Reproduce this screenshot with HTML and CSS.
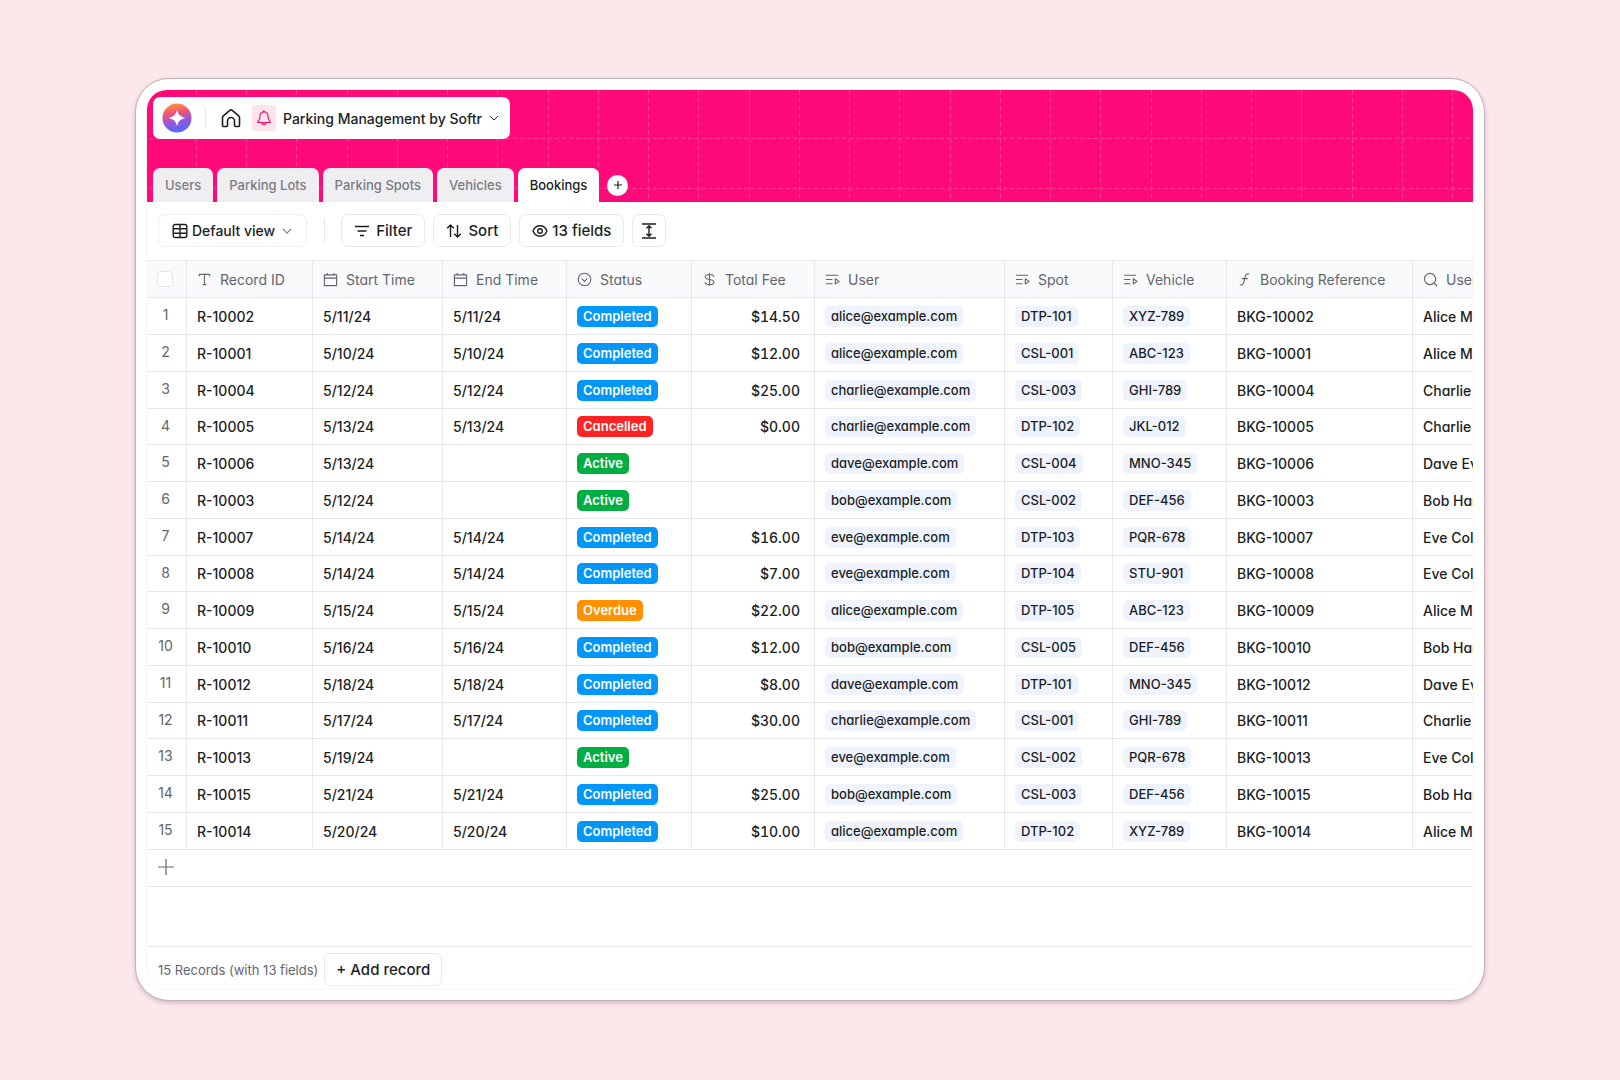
FILE: index.html
```
<!DOCTYPE html>
<html lang="en">
<head>
<meta charset="UTF-8">
<meta name="viewport" content="width=device-width, initial-scale=1.0">
<title>Parking Management by Softr</title>
<link rel="stylesheet" href="styles.css">
</head>
<body>
<svg class="sprite" aria-hidden="true">
    <symbol id="i-chevron" viewBox="0 0 12 12"><path d="M1 3.500 6 8.500 11 3.500"/></symbol>
    <symbol id="i-text" viewBox="0 0 16 16"><path d="M2.500 4.500V2.500h11v2M8 2.500v11M6 13.500h4"/></symbol>
    <symbol id="i-date" viewBox="0 0 16 16"><path d="M1.500 3h13v11.500h-13zM1.500 6.500h13M4.500 1v2M11.500 1v2"/></symbol>
    <symbol id="i-select" viewBox="0 0 16 16"><circle cx="8" cy="8" r="6.700"/><path d="M5 7l3 3 3-3"/></symbol>
    <symbol id="i-money" viewBox="0 0 16 16"><path d="M8 1v14M12.500 5C12.500 3.300 11 2.700 8 2.700S3.500 3.700 3.500 5.300C3.500 7.200 5.500 7.600 8 8s4.700.9 4.700 2.800S11 13.300 8 13.300 3.300 12.500 3.300 10.700"/></symbol>
    <symbol id="i-link" viewBox="0 0 16 16"><path d="M1 3.500h13M1 8h7M1 12.500h7M11 7.200v5.600l4-2.800z"/></symbol>
    <symbol id="i-formula" viewBox="0 0 16 16"><path d="M13 2.200c-2.500-.6-3.600 0-4.200 2.500L7.200 11.300C6.600 13.700 5.500 14.300 3 13.700M5 7h6.500"/></symbol>
    <symbol id="i-search" viewBox="0 0 16 16"><circle cx="7.500" cy="7.500" r="6"/><path d="M12 12l3 3"/></symbol>
</svg>

<main class="window">
    <div class="screen">
        <header class="banner">
            <svg class="banner-grid" aria-hidden="true">
                <defs>
                    <pattern id="columns" x="49" y="0" width="201" height="8" patternUnits="userSpaceOnUse">
                        <path d="M.5 0v5M50.500 0v5M100.500 0v5M151.500 0v5"/>
                    </pattern>
                    <pattern id="rows" x="2" y="48" width="7" height="50" patternUnits="userSpaceOnUse">
                        <path d="M0 .5h4"/>
                    </pattern>
                </defs>
                <rect width="100%" height="100%" fill="url(#columns)"/>
                <rect width="100%" height="100%" fill="url(#rows)"/>
            </svg>
            <div class="app-bar">
                <a class="logo" href="#" aria-label="Softr">
                    <svg viewBox="0 0 30 30">
                        <defs>
                            <linearGradient id="sunset" x1="0.4" y1="0" x2="0.6" y2="1">
                                <stop offset="0" stop-color="#ff9142"/>
                                <stop offset="0.3" stop-color="#f2566f"/>
                                <stop offset="0.6" stop-color="#9a57d8"/>
                                <stop offset="1" stop-color="#4b6bff"/>
                            </linearGradient>
                        </defs>
                        <circle cx="15" cy="15" r="14.500" fill="url(#sunset)"/>
                        <path fill="#fff" d="M15 6.800c1.300 5 3.200 6.900 8.200 8.200-5 1.300-6.900 3.200-8.200 8.200-1.300-5-3.200-6.900-8.200-8.200 5-1.300 6.900-3.200 8.200-8.200z"/>
                    </svg>
                </a>
                <span class="divider"></span>
                <a class="home" href="#" aria-label="Home">
                    <svg viewBox="0 0 20 20"><path d="M1.500 9.500a2 2 0 0 1 .8-1.600L8.800 2.300a2 2 0 0 1 2.400 0l6.500 5.600a2 2 0 0 1 .8 1.600v8a1 1 0 0 1-1 1h-3a1 1 0 0 1-1-1V13a3.500 3.500 0 0 0-7 0v4.500a1 1 0 0 1-1 1h-3a1 1 0 0 1-1-1z"/></svg>
                </a>
                <button class="app-name">
                    <span class="app-icon">
                        <svg viewBox="0 0 16 16"><path d="M8 2C5.400 2 4 3.800 4 6.200 4 9 3 10.500 1.700 12.500h12.600C13 10.500 12 9 12 6.200 12 3.800 10.600 2 8 2zM6 12.500a2 2 0 0 0 4 0M7 2a1 1 0 0 1 2 0"/></svg>
                    </span>
                    Parking Management by Softr
                    <svg class="chevron"><use href="#i-chevron"/></svg>
                </button>
            </div>
            <nav class="tabs">
                <a href="#">Users</a>
                <a href="#">Parking Lots</a>
                <a href="#">Parking Spots</a>
                <a href="#">Vehicles</a>
                <a class="active" href="#">Bookings</a>
                <button class="add-tab" aria-label="Add table">
                    <svg viewBox="0 0 10 10"><path d="M5 1v8M1 5h8"/></svg>
                </button>
            </nav>
        </header>

        <div class="toolbar">
            <button class="view">
                <svg viewBox="0 0 16 16"><rect x="1.200" y="1.500" width="13.600" height="13" rx="2"/><path d="M1.200 5.800h13.600M1.200 10.200h13.600M8 1.500v13"/></svg>
                Default view
                <svg class="chevron"><use href="#i-chevron"/></svg>
            </button>
            <span class="divider"></span>
            <button class="filter">
                <svg viewBox="0 0 16 16"><path d="M1 3.500h14M3.500 8h9M6 12.500h4"/></svg>
                Filter
            </button>
            <button class="sort">
                <svg viewBox="0 0 16 16"><path d="M4.500 14V2M1.200 5.300 4.500 2l3.300 3.300M11.500 2v12M8.200 10.700l3.300 3.300 3.300-3.300"/></svg>
                Sort
            </button>
            <button class="fields">
                <svg viewBox="0 0 16 16"><path d="M1 8c1.300-3.300 3.800-5.200 7-5.200S13.700 4.700 15 8c-1.300 3.300-3.800 5.200-7 5.200S2.300 11.300 1 8z"/><circle cx="8" cy="8" r="2.300"/></svg>
                13 fields
            </button>
            <button class="row-height" aria-label="Row height">
                <svg viewBox="0 0 16 16"><path d="M1 1h14M1 15h14M8 3v10M5.500 5.300 8 2.800l2.500 2.500M5.500 10.700 8 13.200l2.500-2.500"/></svg>
            </button>
        </div>

        <div class="grid">
            <table>
                <colgroup>
                    <col class="c-num"><col class="c-id"><col class="c-start"><col class="c-end"><col class="c-status"><col class="c-fee">
                    <col class="c-user"><col class="c-spot"><col class="c-vehicle"><col class="c-ref"><col class="c-name">
                </colgroup>
                <thead>
                    <tr>
                        <th><input type="checkbox" aria-label="Select all records"></th>
                        <th><span><svg><use href="#i-text"/></svg>Record ID</span></th>
                        <th><span><svg><use href="#i-date"/></svg>Start Time</span></th>
                        <th><span><svg><use href="#i-date"/></svg>End Time</span></th>
                        <th><span><svg><use href="#i-select"/></svg>Status</span></th>
                        <th><span><svg><use href="#i-money"/></svg>Total Fee</span></th>
                        <th><span><svg><use href="#i-link"/></svg>User</span></th>
                        <th><span><svg><use href="#i-link"/></svg>Spot</span></th>
                        <th><span><svg><use href="#i-link"/></svg>Vehicle</span></th>
                        <th><span><svg><use href="#i-formula"/></svg>Booking Reference</span></th>
                        <th><span><svg><use href="#i-search"/></svg>User Name</span></th>
                    </tr>
                </thead>
                <tbody id="records"></tbody>
            </table>
            <button class="add-row" aria-label="Add row">
                <svg viewBox="0 0 16 16"><path d="M8 0v16M0 8h16"/></svg>
            </button>
        </div>

        <footer class="footer">
            <span>15 Records (with 13 fields)</span>
            <button>+ Add record</button>
        </footer>
    </div>
</main>

<script src="script.js"></script>
</body>
</html>
```
FILE: styles.css
```
* {
    box-sizing: border-box;
}
body {
    margin: 0;
    min-height: 100vh;
    display: flex;
    padding: 78px 135px 79px;
    background-color: #fce7eb;
    font-family: Inter, sans-serif;
    color: #1b1e24;
}
button {
    margin: 0;
    font: inherit;
    color: inherit;
    border: none;
    background: none;
    cursor: pointer;
}
a {
    color: inherit;
    text-decoration: none;
}
svg {
    flex: none;
    fill: none;
    stroke: currentColor;
    stroke-width: 1.2;
    stroke-linejoin: round;
}
.sprite {
    display: none;
}
.window {
    flex: 1;
    min-width: 0;
    display: flex;
    padding: 11px;
    border: 1px solid #bfb1b5;
    border-radius: 34px;
    background-color: #fff;
    box-shadow: 0 2px 4px rgba(90, 50, 60, 0.25);
}
.screen {
    flex: 1;
    min-width: 0;
    display: flex;
    flex-direction: column;
    overflow: hidden;
    border-radius: 20px;
    box-shadow: 0 0 0 1px #f6f6f7;
}
.divider {
    width: 1px;
    background-color: #e6e8eb;
}
.chevron {
    width: 12px;
    height: 12px;
}

/* pink banner */
.banner {
    position: relative;
    display: flex;
    flex-direction: column;
    align-items: flex-start;
    gap: 29px;
    padding: 7px 6px 0;
    background-color: #ff0a78;
}
.banner-grid {
    position: absolute;
    inset: 0;
    width: 100%;
    height: 100%;
    stroke: #ff3a92;
    stroke-width: 1;
}
.banner-grid rect {
    stroke: none;
}
.app-bar {
    position: relative;
    display: flex;
    align-items: center;
    height: 42px;
    padding: 0 11px 0 9px;
    border-radius: 7px;
    background-color: #fff;
}
.logo,
.home {
    display: flex;
}
.logo svg {
    width: 30px;
    height: 30px;
    stroke: none;
}
.app-bar .divider {
    height: 22px;
    margin: 0 15px 0 13px;
}
.home svg {
    width: 20px;
    height: 20px;
    stroke-width: 1.6;
}
.app-name {
    display: flex;
    align-items: center;
    gap: 7px;
    margin-left: 11px;
    padding: 0;
    font-size: 14px;
    font-weight: 500;
}
.app-icon {
    display: flex;
    align-items: center;
    justify-content: center;
    width: 24px;
    height: 26px;
    border-radius: 4px;
    background-color: #ffe3ec;
    color: #f0146e;
}
.app-icon svg {
    width: 16px;
    height: 16px;
}
.app-name .chevron {
    width: 10px;
    height: 10px;
}
.tabs {
    position: relative;
    display: flex;
    gap: 4px;
    height: 34px;
    font-size: 13px;
    font-weight: 500;
}
.tabs a {
    display: flex;
    align-items: center;
    padding: 0 12px;
    border-radius: 7px 7px 0 0;
    background-color: #efeff2;
    color: #7a7b82;
}
.tabs .active {
    background-color: #fff;
    color: #1b1e24;
}
.add-tab {
    display: flex;
    align-items: center;
    justify-content: center;
    align-self: center;
    width: 21px;
    height: 21px;
    margin-left: 4px;
    padding: 0;
    border-radius: 50%;
    background-color: #fff;
}
.add-tab svg {
    width: 10px;
    height: 10px;
}

/* view controls */
.toolbar {
    display: flex;
    align-items: center;
    gap: 8px;
    padding: 12px 11px 13px;
    font-size: 15px;
    font-weight: 500;
}
.toolbar button {
    display: flex;
    align-items: center;
    gap: 4px;
    height: 33px;
    padding: 0 12px;
    border: 1px solid #e6e8eb;
    border-radius: 7px;
}
.toolbar svg {
    width: 16px;
    height: 16px;
    stroke-width: 1.4;
}
.toolbar .view {
    padding: 0 14px 0 13px;
    border-color: #eceef0;
    font-size: 14px;
}
.toolbar .chevron {
    width: 10px;
    height: 10px;
    margin-left: 3px;
    color: #7a7b82;
}
.toolbar .divider {
    height: 26px;
    margin: 0 8px 0 9px;
}
.toolbar .filter,
.toolbar .sort {
    gap: 6px;
}
.toolbar .row-height {
    padding: 0 8px;
}

/* records */
.grid {
    flex: 1;
    overflow: hidden;
    border-top: 1px solid #e6e8eb;
}
table {
    width: 100%;
    min-width: 1326px;
    table-layout: fixed;
    border-collapse: separate;
    border-spacing: 0;
    font-size: 14px;
    font-weight: 500;
    font-feature-settings: "cv11";
}
.c-num { width: 40px; }
.c-id { width: 126px; }
.c-start { width: 130px; }
.c-end { width: 124px; }
.c-status { width: 125px; }
.c-fee { width: 123px; }
.c-user { width: 190px; }
.c-spot { width: 108px; }
.c-vehicle { width: 114px; }
.c-ref { width: 186px; }
th,
td {
    height: 37px;
    padding: 0 10px;
    border-right: 1px solid #e6e8eb;
    border-bottom: 1px solid #e6e8eb;
    text-align: left;
    white-space: nowrap;
    overflow: hidden;
}
/* four rows share 147px */
tbody tr:nth-child(4n) td {
    height: 36px;
}
th:last-child,
td:last-child {
    padding-right: 0;
    border-right: none;
}
th {
    background-color: #f8fafb;
    color: #63666d;
    font-weight: 400;
}
th span {
    display: flex;
    align-items: center;
    gap: 8px;
}
th svg {
    width: 15px;
    height: 15px;
}
th input {
    appearance: none;
    display: block;
    width: 16px;
    height: 16px;
    margin: 0;
    border: 1px solid #e3e5e8;
    border-radius: 4px;
    background-color: #fff;
}
td:first-child {
    padding: 0 2px 3px 0;
    text-align: center;
    color: #63666d;
    font-weight: 400;
}
.fee {
    padding-right: 14px;
    text-align: right;
    font-variant-numeric: tabular-nums;
}
.tag {
    display: inline-block;
    padding: 0 6px;
    border-radius: 5px;
    font-size: 13px;
    line-height: 21px;
}
.status {
    color: #fff;
    font-weight: 600;
}
.completed { background-color: #0096fa; }
.cancelled { background-color: #ff2424; }
.active-now { background-color: #00ae42; }
.overdue { background-color: #ff9100; }
.link {
    background-color: #eef3fd;
}
.add-row {
    display: flex;
    align-items: center;
    width: 100%;
    height: 37px;
    padding: 0 11px 2px;
    border-bottom: 1px solid #e6e8eb;
    color: #63666d;
}
.add-row svg {
    width: 16px;
    height: 16px;
}

.footer {
    display: flex;
    align-items: center;
    gap: 6px;
    padding: 6px 11px 3px;
    border-top: 1px solid #e6e8eb;
    color: #63666d;
    font-size: 13px;
}
.footer button {
    height: 33px;
    padding: 0 11px;
    border: 1px solid #e6e8eb;
    border-radius: 6px;
    color: #1b1e24;
    font-size: 15px;
    font-weight: 500;
}
```
FILE: script.js
```
const bookings = [
    ["10002", "5/11/24", "5/11/24", "Completed", "$14.50", "alice", "DTP-101", "XYZ-789"],
    ["10001", "5/10/24", "5/10/24", "Completed", "$12.00", "alice", "CSL-001", "ABC-123"],
    ["10004", "5/12/24", "5/12/24", "Completed", "$25.00", "charlie", "CSL-003", "GHI-789"],
    ["10005", "5/13/24", "5/13/24", "Cancelled", "$0.00", "charlie", "DTP-102", "JKL-012"],
    ["10006", "5/13/24", "", "Active", "", "dave", "CSL-004", "MNO-345"],
    ["10003", "5/12/24", "", "Active", "", "bob", "CSL-002", "DEF-456"],
    ["10007", "5/14/24", "5/14/24", "Completed", "$16.00", "eve", "DTP-103", "PQR-678"],
    ["10008", "5/14/24", "5/14/24", "Completed", "$7.00", "eve", "DTP-104", "STU-901"],
    ["10009", "5/15/24", "5/15/24", "Overdue", "$22.00", "alice", "DTP-105", "ABC-123"],
    ["10010", "5/16/24", "5/16/24", "Completed", "$12.00", "bob", "CSL-005", "DEF-456"],
    ["10012", "5/18/24", "5/18/24", "Completed", "$8.00", "dave", "DTP-101", "MNO-345"],
    ["10011", "5/17/24", "5/17/24", "Completed", "$30.00", "charlie", "CSL-001", "GHI-789"],
    ["10013", "5/19/24", "", "Active", "", "eve", "CSL-002", "PQR-678"],
    ["10015", "5/21/24", "5/21/24", "Completed", "$25.00", "bob", "CSL-003", "DEF-456"],
    ["10014", "5/20/24", "5/20/24", "Completed", "$10.00", "alice", "DTP-102", "XYZ-789"]
];

const names = {
    alice: "Alice Moore",
    bob: "Bob Harris",
    charlie: "Charlie Davis",
    dave: "Dave Evans",
    eve: "Eve Collins"
};

const statusClass = {
    Completed: "completed",
    Cancelled: "cancelled",
    Active: "active-now",
    Overdue: "overdue"
};

document.getElementById("records").innerHTML = bookings.map(([id, start, end, status, fee, user, spot, vehicle], i) => `
    <tr>
        <td>${i + 1}</td>
        <td>R-${id}</td>
        <td>${start}</td>
        <td>${end}</td>
        <td><span class="tag status ${statusClass[status]}">${status}</span></td>
        <td class="fee">${fee}</td>
        <td><span class="tag link">${user}@example.com</span></td>
        <td><span class="tag link">${spot}</span></td>
        <td><span class="tag link">${vehicle}</span></td>
        <td>BKG-${id}</td>
        <td>${names[user]}</td>
    </tr>`).join("");
```
